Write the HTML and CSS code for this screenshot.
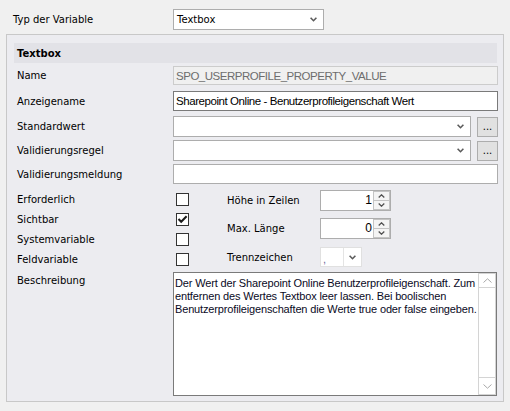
FILE: index.html
```html
<!DOCTYPE html>
<html lang="de">
<head>
<meta charset="utf-8">
<title>Variable</title>
<link rel="stylesheet" href="styles.css">
</head>
<body>
<div class="top">
  <span class="top-label">Typ der Variable</span>
  <div class="combo combo-type">
    <span class="combo-text">Textbox</span>
    <svg class="chev" width="7" height="5" viewBox="0 0 7 5"><path d="M0.6 0.8 L3.5 3.7 L6.4 0.8" fill="none" stroke="#5a5a5a" stroke-width="1.6"/></svg>
  </div>
</div>
<div class="panel">
  <div class="band">Textbox</div>

  <div class="row row-name">
    <span class="lbl">Name</span>
    <div class="input input-disabled">SPO_USERPROFILE_PROPERTY_VALUE</div>
  </div>

  <div class="row row-display">
    <span class="lbl">Anzeigename</span>
    <div class="input input-focus">Sharepoint Online - Benutzerprofileigenschaft Wert</div>
  </div>

  <div class="row row-default">
    <span class="lbl">Standardwert</span>
    <div class="combo combo-wide">
      <span class="combo-text"></span>
      <svg class="chev" width="7" height="5" viewBox="0 0 7 5"><path d="M0.6 0.8 L3.5 3.7 L6.4 0.8" fill="none" stroke="#5a5a5a" stroke-width="1.6"/></svg>
    </div>
    <div class="btn">...</div>
  </div>

  <div class="row row-rule">
    <span class="lbl">Validierungsregel</span>
    <div class="combo combo-wide">
      <span class="combo-text"></span>
      <svg class="chev" width="7" height="5" viewBox="0 0 7 5"><path d="M0.6 0.8 L3.5 3.7 L6.4 0.8" fill="none" stroke="#5a5a5a" stroke-width="1.6"/></svg>
    </div>
    <div class="btn">...</div>
  </div>

  <div class="row row-msg">
    <span class="lbl">Validierungsmeldung</span>
    <div class="input"></div>
  </div>

  <div class="flags">
    <div class="flags-left">
      <span class="flag-lbl">Erforderlich</span><span class="cb"></span>
      <span class="flag-lbl">Sichtbar</span><span class="cb"><svg width="11" height="11" viewBox="0 0 11 11"><path d="M1.5 5 L4.2 7.8 L9.6 2.2" fill="none" stroke="#1a1a1a" stroke-width="2"/></svg></span>
      <span class="flag-lbl">Systemvariable</span><span class="cb"></span>
      <span class="flag-lbl">Feldvariable</span><span class="cb"></span>
    </div>
    <div class="flags-right">
      <div class="fr-row fr-height">
        <span class="fr-lbl">Höhe in Zeilen</span>
        <div class="spin">
          <span class="spin-val">1</span>
          <div class="spin-btns">
            <span class="spin-b"><svg width="7" height="4" viewBox="0 0 7 4"><path d="M0.7 3.4 L3.5 0.8 L6.3 3.4" fill="none" stroke="#505050" stroke-width="1.3"/></svg></span>
            <span class="spin-b"><svg width="7" height="4" viewBox="0 0 7 4"><path d="M0.7 0.6 L3.5 3.2 L6.3 0.6" fill="none" stroke="#505050" stroke-width="1.3"/></svg></span>
          </div>
        </div>
      </div>
      <div class="fr-row fr-len">
        <span class="fr-lbl">Max. Länge</span>
        <div class="spin">
          <span class="spin-val">0</span>
          <div class="spin-btns">
            <span class="spin-b"><svg width="7" height="4" viewBox="0 0 7 4"><path d="M0.7 3.4 L3.5 0.8 L6.3 3.4" fill="none" stroke="#505050" stroke-width="1.3"/></svg></span>
            <span class="spin-b"><svg width="7" height="4" viewBox="0 0 7 4"><path d="M0.7 0.6 L3.5 3.2 L6.3 0.6" fill="none" stroke="#505050" stroke-width="1.3"/></svg></span>
          </div>
        </div>
      </div>
      <div class="fr-row fr-sep">
        <span class="fr-lbl">Trennzeichen</span>
        <div class="sep-combo">
          <span class="sep-val">,</span>
          <span class="sep-btn"><svg width="7" height="5" viewBox="0 0 7 5"><path d="M0.6 0.8 L3.5 3.7 L6.4 0.8" fill="none" stroke="#5a5a5a" stroke-width="1.6"/></svg></span>
        </div>
      </div>
    </div>
  </div>

  <div class="desc-row">
    <span class="lbl lbl-top">Beschreibung</span>
    <div class="textarea">
      <div class="ta-text">
        <span class="ta-line">Der Wert der Sharepoint Online Benutzerprofileigenschaft. Zum</span>
        <span class="ta-line">entfernen des Wertes Textbox leer lassen. Bei boolischen</span>
        <span class="ta-line">Benutzerprofileigenschaften die Werte true oder false eingeben.</span>
      </div>
      <div class="scroll">
        <span class="sb-btn sb-up"><svg width="9" height="5" viewBox="0 0 9 5"><path d="M0.5 4.5 L4.5 0.8 L8.5 4.5" fill="none" stroke="#a8a8a8" stroke-width="1"/></svg></span>
        <span class="sb-track"></span>
        <span class="sb-btn sb-down"><svg width="9" height="5" viewBox="0 0 9 5"><path d="M0.5 0.5 L4.5 4.2 L8.5 0.5" fill="none" stroke="#a8a8a8" stroke-width="1"/></svg></span>
      </div>
    </div>
  </div>
</div>
</body>
</html>
```

FILE: styles.css
```css
* { box-sizing: border-box; }

html, body {
  margin: 0;
  padding: 0;
}

body {
  background: #f0f0f0;
  font-family: "DejaVu Sans", sans-serif;
  font-size: 10px;
  color: #000;
  width: 510px;
  height: 411px;
  overflow: hidden;
}

.top {
  display: flex;
  align-items: center;
  height: 30px;
  padding: 9px 0 0 13px;
}

.top-label {
  width: 160px;
}

.combo {
  display: flex;
  align-items: center;
  justify-content: space-between;
  background: #fff;
  border: 1px solid #adadad;
  height: 21px;
  padding: 0 6px 0 3px;
}

.combo-type {
  width: 151px;
}

.combo-wide {
  width: 298px;
}

.chev {
  display: block;
}

.panel {
  margin: 4px 0 0 6px;
  width: 498px;
  height: 368px;
  border: 1px solid #c8c8c8;
  background: #ececf0;
  padding: 8px 5px 5px 7px;
}

.band {
  width: 483px;
  height: 20px;
  background: #e2e2e7;
  font-weight: bold;
  padding-left: 3px;
  display: flex;
  align-items: center;
}

.row {
  display: flex;
  align-items: center;
}

.row-name { margin-top: 3px; }
.row-display { margin-top: 6px; }
.row-default { margin-top: 5px; }
.row-rule { margin-top: 3px; }
.row-msg { margin-top: 3px; }

.lbl {
  width: 159px;
  flex: none;
  padding-left: 3px;
}

.input {
  width: 325px;
  height: 20px;
  border: 1px solid #adadad;
  background: #fff;
  font-family: "Liberation Sans", Arial, sans-serif;
  font-size: 11px;
  letter-spacing: -0.1px;
  padding-left: 2px;
  display: flex;
  align-items: center;
  white-space: nowrap;
}

.row-name .input { height: 19px; }

.input-disabled {
  background: #f0f0f0;
  border-color: #cccccc;
  color: #6d6d6d;
  font-size: 11.5px;
  letter-spacing: -0.48px;
}

.input-focus {
  border-color: #7a7a7a;
  font-size: 11.5px;
  letter-spacing: -0.43px;
}

.btn {
  width: 21px;
  height: 20px;
  margin-left: 6px;
  border: 1px solid #adadad;
  background: #e1e1e1;
  display: flex;
  align-items: center;
  justify-content: center;
  padding-bottom: 1px;
}

.flags {
  display: flex;
  margin-top: 6px;
}

.flags-left {
  display: grid;
  grid-template-columns: 159px 54px;
  grid-auto-rows: 20px;
}

.flag-lbl {
  padding-left: 3px;
  display: flex;
  align-items: center;
  padding-bottom: 1px;
}

.cb {
  width: 13px;
  height: 13px;
  margin: 3px 0 0 3px;
  border: 1px solid #333;
  background: #fff;
  display: flex;
  align-items: center;
  justify-content: center;
}

.cb svg { display: block; }

.flags-right {
  display: flex;
  flex-direction: column;
}

.fr-row {
  display: flex;
  align-items: center;
  height: 21px;
}

.fr-len { margin-top: 7px; }
.fr-sep { margin-top: 8px; height: 20px; }

.fr-lbl {
  width: 93px;
}

.spin {
  display: flex;
  width: 71px;
  height: 21px;
  border: 1px solid #adadad;
  background: #fff;
}

.spin-val {
  flex: 1;
  text-align: right;
  padding-right: 1px;
  font-family: "Liberation Sans", Arial, sans-serif;
  font-size: 12px;
  line-height: 19px;
}

.spin-btns {
  width: 17px;
  display: flex;
  flex-direction: column;
}

.spin-b {
  flex: 1;
  border: 1px solid #c4c4c4;
  background: #f4f4f4;
  display: flex;
  align-items: center;
  justify-content: center;
}

.spin-b + .spin-b { border-top: none; }

.spin-b svg { display: block; }

.sep-combo {
  display: flex;
  width: 42px;
  height: 20px;
  border: 1px solid #e0e0e0;
  background: #fff;
}

.sep-val {
  width: 23px;
  border-right: 1px solid #e4e4e4;
  font-family: "Liberation Sans", Arial, sans-serif;
  font-size: 11px;
  color: #6a6a9a;
  padding-left: 2px;
  line-height: 22px;
}

.sep-btn {
  flex: 1;
  display: flex;
  align-items: center;
  justify-content: center;
}

.desc-row {
  display: flex;
  align-items: flex-start;
  margin-top: 2px;
}

.lbl-top {
  padding-top: 3px;
}

.textarea {
  width: 324px;
  height: 124px;
  border: 1px solid #7a7a7a;
  background: #fff;
  display: flex;
}

.ta-text {
  flex: 1;
  padding: 4px 0 0 1px;
  font-family: "Liberation Sans", Arial, sans-serif;
  font-size: 11px;
  letter-spacing: -0.15px;
  line-height: 13px;
  color: #0a0a1e;
}

.ta-line {
  display: block;
  white-space: nowrap;
}

.scroll {
  width: 18px;
  border: 1px solid #d4d4d4;
  display: flex;
  flex-direction: column;
}

.sb-btn {
  display: flex;
  align-items: center;
  justify-content: center;
}

.sb-up { border-bottom: 1px solid #d4d4d4; height: 14px; }
.sb-down { border-top: 1px solid #d4d4d4; height: 17px; }

.sb-track { flex: 1; }
```
